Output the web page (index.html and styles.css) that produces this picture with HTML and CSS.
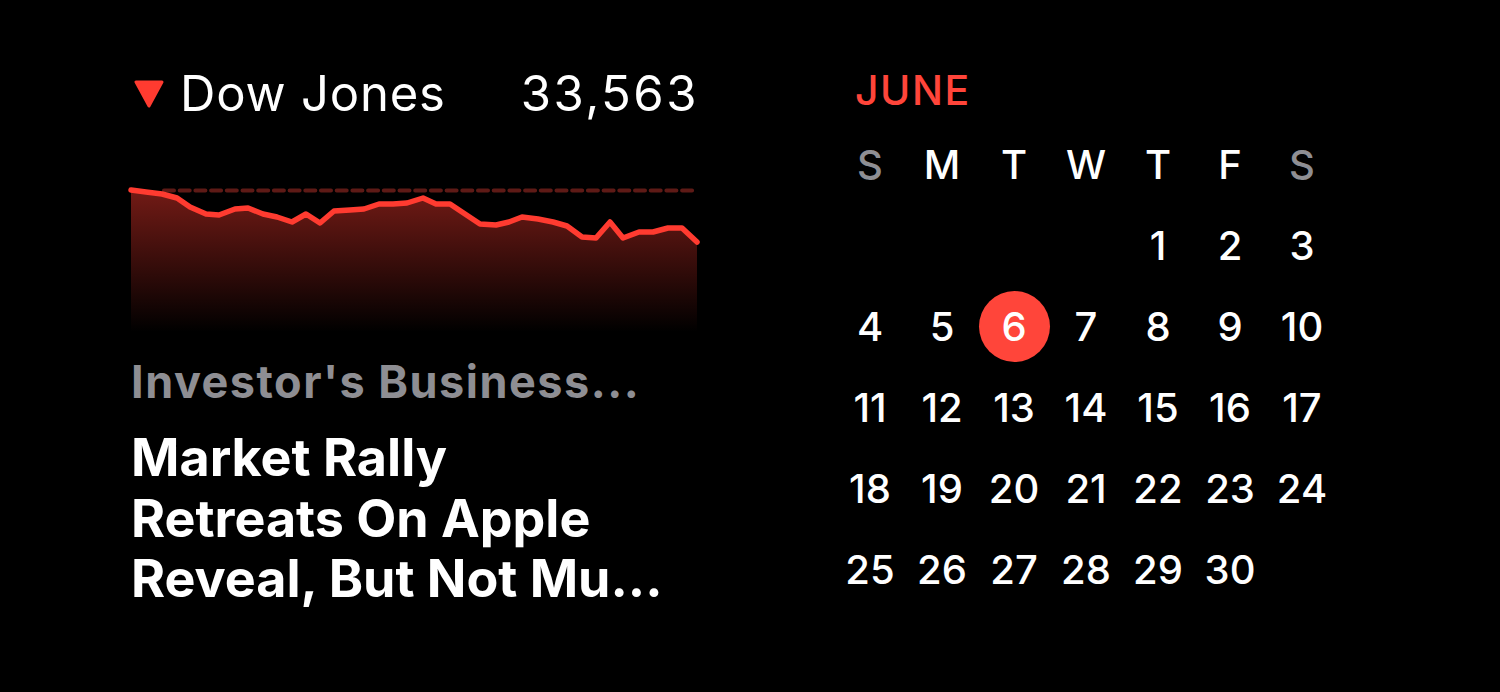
FILE: index.html
```html
<html>
<head>
    <title>Widgets</title>
    <link rel="stylesheet" href="styles.css">
</head>
<body>
    <div class="board">
        <!-- Stocks widget -->
        <div class="stocks">
            <div class="ticker">
                <div class="ticker-name">
                    <svg class="arrow" width="30" height="28" viewBox="0 0 30 28">
                        <path d="M2 2 L28 2 L15 26 Z" fill="#ff3b30" stroke="#ff3b30" stroke-width="3" stroke-linejoin="round"/>
                    </svg>
                    <span>Dow Jones</span>
                </div>
                <span class="ticker-value">33,563</span>
            </div>

            <svg class="chart" width="566" height="150" viewBox="0 0 566 150">
                <defs>
                    <linearGradient id="fade" x1="0" y1="0" x2="0" y2="1">
                        <stop offset="0" stop-color="#ff3b30" stop-opacity="0.45"/>
                        <stop offset="1" stop-color="#ff3b30" stop-opacity="0"/>
                    </linearGradient>
                </defs>
                <line x1="33" y1="8.5" x2="562" y2="8.5" stroke="#5e1a16" stroke-width="4" stroke-dasharray="10 5.7" stroke-linecap="round"/>
                <path fill="url(#fade)" d="M0 8 L15 10 L31 12 L46 16 L59 25 L75 32 L88 33 L104 27 L117 26 L132 32 L146 35 L161 40 L175 32 L189 41 L203 29 L219 28 L233 27 L248 22 L262 22 L276 21 L292 16 L305 22 L319 22 L334 32 L349 42 L365 43 L378 40 L391 35 L407 37 L422 40 L436 44 L451 55 L465 56 L479 40 L492 56 L508 50 L522 50 L537 46 L551 46 L566 60 L566 150 L0 150 Z"/>
                <path fill="none" stroke="#ff3b30" stroke-width="5.5" stroke-linejoin="round" stroke-linecap="round" d="M0 8 L15 10 L31 12 L46 16 L59 25 L75 32 L88 33 L104 27 L117 26 L132 32 L146 35 L161 40 L175 32 L189 41 L203 29 L219 28 L233 27 L248 22 L262 22 L276 21 L292 16 L305 22 L319 22 L334 32 L349 42 L365 43 L378 40 L391 35 L407 37 L422 40 L436 44 L451 55 L465 56 L479 40 L492 56 L508 50 L522 50 L537 46 L551 46 L566 60"/>
            </svg>

            <div class="source">Investor's Business...</div>
            <div class="headline">Market Rally<br>Retreats On Apple<br>Reveal, But Not Mu...</div>
        </div>

        <!-- Calendar widget -->
        <div class="calendar">
            <div class="month">JUNE</div>
            <div class="days">
                <span class="weekend">S</span><span>M</span><span>T</span><span>W</span><span>T</span><span>F</span><span class="weekend">S</span>
                <span></span><span></span><span></span><span></span><span>1</span><span>2</span><span>3</span>
                <span>4</span><span>5</span><span class="today">6</span><span>7</span><span>8</span><span>9</span><span>10</span>
                <span>11</span><span>12</span><span>13</span><span>14</span><span>15</span><span>16</span><span>17</span>
                <span>18</span><span>19</span><span>20</span><span>21</span><span>22</span><span>23</span><span>24</span>
                <span>25</span><span>26</span><span>27</span><span>28</span><span>29</span><span>30</span><span></span>
            </div>
        </div>
    </div>
</body>
</html>
```

FILE: styles.css
```css
body {
    margin: 0;
    background-color: black;
    color: white;
    font-family: Inter, "Noto Sans", sans-serif;
}
.board {
    display: flex;
    gap: 137px;
    padding: 66px 0 0 131px;
}
.stocks {
    width: 566px;
    display: flex;
    flex-direction: column;
}
.ticker {
    display: flex;
    justify-content: space-between;
    align-items: center;
    height: 56px;
    font-size: 49px;
    line-height: 56px;
    letter-spacing: 0.8px;
}
.ticker-name {
    display: flex;
    align-items: center;
    gap: 16px;
}
.ticker-value {
    letter-spacing: 2.5px;
    margin-right: -2px;
}
.arrow {
    margin-left: 3px;
}
.chart {
    margin-top: 60px;
    overflow: visible;
}
.source {
    margin-top: 24px;
    font-size: 45px;
    line-height: 52px;
    font-weight: 700;
    letter-spacing: 1.5px;
    color: #8e8e93;
}
.headline {
    margin-top: 20px;
    font-size: 52px;
    line-height: 60.5px;
    font-weight: 700;
}
.calendar {
    display: flex;
    flex-direction: column;
}
.month {
    padding-left: 21px;
    font-size: 41px;
    line-height: 48px;
    font-weight: 500;
    letter-spacing: 1.5px;
    color: #ff453a;
}
.days {
    margin-top: 10px;
    display: grid;
    grid-template-columns: repeat(7, 72px);
    grid-auto-rows: 81px;
    font-size: 40px;
    font-weight: 500;
}
.days span {
    display: flex;
    align-items: center;
    justify-content: center;
}
.days .weekend {
    color: #8e8e93;
}
.days .today {
    width: 71px;
    height: 71px;
    margin: 5px auto 0;
    border-radius: 50%;
    background-color: #ff453a;
}
```
